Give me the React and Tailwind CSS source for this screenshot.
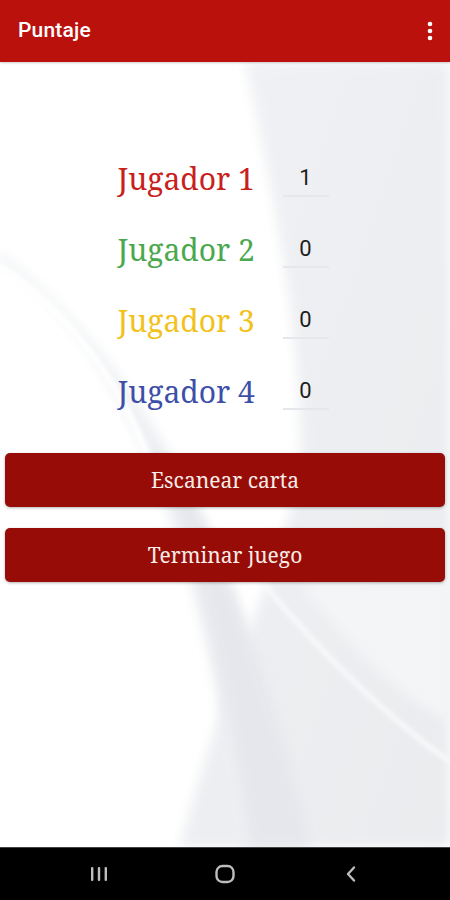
import React from "react";

function Background() {
  return (
    <svg
      className="absolute inset-0 w-full h-full"
      viewBox="0 0 450 785"
      preserveAspectRatio="none"
      aria-hidden="true"
    >
      <defs>
        <filter id="blur" x="-20%" y="-20%" width="140%" height="140%">
          <feGaussianBlur stdDeviation="6" />
        </filter>
        <filter id="blur2" x="-20%" y="-20%" width="140%" height="140%">
          <feGaussianBlur stdDeviation="2" />
        </filter>
        <linearGradient id="g1" x1="0" y1="0" x2="1" y2="1">
          <stop offset="0" stopColor="#f1f2f5" />
          <stop offset="1" stopColor="#e9ebee" />
        </linearGradient>
      </defs>
      <rect x="0" y="0" width="450" height="785" fill="#ffffff" />
      <path
        d="M245 0 C 270 120, 300 260, 300 380 C 300 470, 240 560, 180 785 L 450 785 L 450 0 Z"
        fill="url(#g1)"
        filter="url(#blur)"
      />
      <path
        d="M0 200 C 90 260, 150 380, 190 520 C 215 610, 230 700, 240 785 L 300 785 C 280 680, 250 560, 210 470 C 160 360, 90 260, 0 190 Z"
        fill="#eef0f3"
        filter="url(#blur)"
      />
      <path
        d="M150 380 C 185 450, 215 560, 250 785 L 310 785 C 290 690, 260 590, 220 500 C 200 450, 180 410, 150 380 Z"
        fill="#e4e6eb"
        filter="url(#blur)"
        opacity="0.85"
      />
      <path
        d="M0 205 C 70 250, 120 320, 150 400"
        stroke="#ffffff"
        strokeWidth="6"
        fill="none"
        filter="url(#blur2)"
      />
      <path
        d="M0 240 C 55 290, 95 360, 115 430"
        stroke="#ffffff"
        strokeWidth="4"
        fill="none"
        filter="url(#blur2)"
      />
      <path
        d="M262 520 C 320 590, 380 650, 450 700"
        stroke="#f8f9fa"
        strokeWidth="5"
        fill="none"
        filter="url(#blur2)"
      />
      <path
        d="M300 520 C 360 600, 410 640, 450 660 L 450 520 Z"
        fill="#f4f5f7"
        filter="url(#blur)"
      />
      <path
        d="M0 500 C 60 560, 100 700, 120 785 L 0 785 Z"
        fill="#ffffff"
        filter="url(#blur)"
      />
    </svg>
  );
}

const players = [
  { name: "Jugador 1", color: "text-[#c8201c]", score: "1" },
  { name: "Jugador 2", color: "text-[#4aa84e]", score: "0" },
  { name: "Jugador 3", color: "text-[#f2c21b]", score: "0" },
  { name: "Jugador 4", color: "text-[#3e4fa8]", score: "0" },
];

export default function App() {
  return (
    <div className="w-[450px] h-[900px] flex flex-col bg-white overflow-hidden">
      <header className="h-[62px] bg-[#bb110d] flex items-center justify-between pl-[18px] pr-[18px] shrink-0 z-10 shadow-[0_1px_2px_rgba(0,0,0,0.2)]">
        <span className="text-white text-[21px] font-medium font-['Roboto',sans-serif] tracking-[0.2px]">
          Puntaje
        </span>
        <svg width="6" height="20" viewBox="0 0 6 20" className="mr-[-1px]">
          <circle cx="3" cy="3" r="2.3" fill="#fff" />
          <circle cx="3" cy="10" r="2.3" fill="#fff" />
          <circle cx="3" cy="17" r="2.3" fill="#fff" />
        </svg>
      </header>

      <main className="relative flex-1">
        <Background />
        <div className="relative flex flex-col pt-[81px]">
          {players.map((p) => (
            <div key={p.name} className="h-[71px] flex items-center justify-center gap-[30px] pr-[4px]">
              <span
                className={`${p.color} text-[30px] font-['Noto_Serif','DejaVu_Serif',serif] leading-none w-[135px] whitespace-nowrap`}
              >
                {p.name}
              </span>
              <div className="w-[46px] h-[30px] mt-[6px] flex flex-col items-center justify-end">
                <span className="text-[22px] text-[#1e1e1e] font-['Roboto',sans-serif] leading-none mb-[6px]">
                  {p.score}
                </span>
                <div className="w-full h-[1.5px] bg-[#e6e7ea] shrink-0" />
              </div>
            </div>
          ))}

          <div className="flex flex-col gap-[21px] px-[5px] mt-[26px]">
            <button className="h-[54px] rounded-[5px] bg-[#970c06] text-[#f7ece8] text-[21px] font-['Noto_Serif','DejaVu_Serif',serif] shadow-[0_1px_3px_rgba(0,0,0,0.3)] pt-[2px]">
              Escanear carta
            </button>
            <button className="h-[54px] rounded-[5px] bg-[#970c06] text-[#f7ece8] text-[21px] font-['Noto_Serif','DejaVu_Serif',serif] shadow-[0_1px_3px_rgba(0,0,0,0.3)] pt-[2px]">
              Terminar juego
            </button>
          </div>
        </div>
      </main>

      <nav className="h-[53px] bg-black shrink-0 flex items-center justify-center border-t border-[#444]">
        <div className="w-[126px] flex justify-center">
          <svg width="20" height="18" viewBox="0 0 20 18">
            <rect x="2" y="2" width="2.4" height="14" rx="1" fill="#bdbdbd" />
            <rect x="8.8" y="2" width="2.4" height="14" rx="1" fill="#bdbdbd" />
            <rect x="15.6" y="2" width="2.4" height="14" rx="1" fill="#bdbdbd" />
          </svg>
        </div>
        <div className="w-[126px] flex justify-center">
          <svg width="22" height="22" viewBox="0 0 22 22">
            <rect x="2.5" y="3" width="17" height="16" rx="6" fill="none" stroke="#bdbdbd" strokeWidth="2.4" />
          </svg>
        </div>
        <div className="w-[126px] flex justify-center">
          <svg width="16" height="20" viewBox="0 0 16 20">
            <path d="M11 3.5 L5 10 L11 16.5" fill="none" stroke="#bdbdbd" strokeWidth="2.4" strokeLinecap="round" strokeLinejoin="round" />
          </svg>
        </div>
      </nav>
    </div>
  );
}
